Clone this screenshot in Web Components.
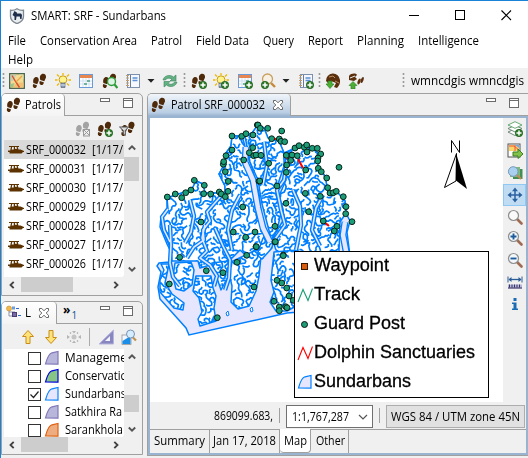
<!DOCTYPE html>
<html lang="en"><head><meta charset="utf-8"><title>SMART: SRF - Sundarbans</title>
<style>html,body{margin:0;width:528px;height:458px;overflow:hidden;background:#f0f0f0}body{font:12px/16px "Open Sans","Noto Sans",sans-serif;color:#000}</style></head>
<body><smart-app></smart-app>
<script>
const def=(name,render)=>customElements.define(name,class extends HTMLElement{
  connectedCallback(){ if(this.shadowRoot)return; this.attachShadow({mode:'open'}).innerHTML=render(this); }
});

/* Text squeezed horizontally to a fixed advance width */
customElements.define('fit-text',class extends HTMLElement{
  connectedCallback(){
    if(this.shadowRoot)return;
    const r=this.attachShadow({mode:'open'});
    r.innerHTML='<style>:host{display:block;flex:none;white-space:nowrap}span{display:inline-block;transform-origin:0 50%;vertical-align:top}</style><span><slot></slot></span>';
    const w=+this.getAttribute('w'), s=r.querySelector('span');
    this.style.width=w+'px';
    s.style.transform='scaleX('+(w/s.getBoundingClientRect().width)+')';
  }
});

const foot='<g fill="#4f2a0a"><path d="M9.500 1.200C12 0 14.500 1.500 14 4.500L12.300 8.300 8.300 7C7.500 4 7.800 2.200 9.500 1.200zM7.800 8l4 1.200c0 2.200-1.500 3.200-2.900 2.700S7 10 7.800 8z"/><path d="M2.800 4.500C5 3.300 7.200 5 6.700 7.700L5.200 11.300 1.400 10C.8 7.500 1.200 5.500 2.800 4.500zM1.200 11l3.700 1.200c0 2.200-1.400 3.200-2.700 2.700S.4 13 1.200 11z"/></g>';
const plus='<circle cx="12" cy="12" r="3.700" fill="#2f7d2b" stroke="#1b5b1c" stroke-width=".7"/><path d="M9.500 12h5M12 9.500v5" stroke="#fff" stroke-width="1.500"/>';
const bulb='<g stroke="#efb900" stroke-width="1.300"><path d="M8 0v2M0 7h2.500M13.500 7H16M2 1.500l2 2M14 1.500l-2 2M2 12.500l2-2M14 12.500l-2-2"/></g><circle cx="8" cy="6.700" r="3.900" fill="#fff48c" stroke="#c99b14"/><path d="M6 10h4v4.500H6z" fill="#8799b5" stroke="#5d6b80" stroke-width=".7"/><path d="M6 12h4" stroke="#fff" stroke-width=".8"/>';
const cal='<rect x="1.500" y="1.500" width="13" height="13" fill="#fff" stroke="#6a9bd8"/><path d="M2 2h12v3H2z" fill="#e88651"/><path d="M2 8h12M2 11h12M5 5v9M8 5v9M11 5v9" stroke="#cfdff2"/><path d="M9 7h3v2H9zM6 10h3v2H6z" fill="#70b39a"/>';
const book='<rect x="2.500" y="1.500" width="12" height="13" fill="#f5f9ff" stroke="#7d91ae"/><path d="M5.500 2v12" stroke="#6b7a90"/><path d="M1 2.500h3M1 5h3M1 7.500h3M1 10h3M1 12.500h3" stroke="#c3a06b"/><path d="M7.500 5h5M7.500 7.500h5" stroke="#5b8fd6" stroke-width="1.300"/>';
const lens=(f,h)=>`<path d="M10 10l4.500 4.500" stroke="${h}" stroke-width="2.600" stroke-linecap="round"/><circle cx="6.500" cy="6.500" r="5" fill="${f}" stroke="#8d8d8d" stroke-width="1.200"/>`;
const up='<path d="M5 8.500l4 4H7V16H3v-3.500H1z" fill="#4cae35" stroke="#257a1e" stroke-width=".6"/>';
const I={
 shield:'<path d="M8 .7C6 2 3.500 2.500 1.500 2.200v6C1.500 12 5 14.500 8 15.700c3-1.200 6.500-3.700 6.500-7.500v-6C12.500 2.500 10 2 8 .7z" fill="#e9edf0" stroke="#7d8890" stroke-width="1.300"/><path d="M5.500 3l1.500 1h.5l.5 1.500h4l1 1.500-.5 4h-1.300l-.4-2.500H7.500L7 12H5.500V8.500L3.500 7z" fill="#1e2e4c"/>',
 map:'<rect x=".7" y=".7" width="14.600" height="14.600" fill="#f3dc92" stroke="#45614d" stroke-width="1.300"/><path d="M1.500 1.500h6l-3 6-3 1z" fill="#c3cfb4"/><path d="M10 1.500h4.500v5z" fill="#d6dfa8"/><path d="M3 14.500l5-5 6.500 0v5z" fill="#f0c277"/><path d="M3 2.500l3.500 6 4 6" stroke="#d9522c" stroke-width="1.400" fill="none"/><path d="M7 9l6-6" stroke="#f0a24a" stroke-width="1.200"/><path d="M1.500 11l4-1-1.500 4.500H1.500z" fill="#9fc48a"/>',
 feet:foot, feetplus:foot+plus, bulb, bulbplus:bulb+plus, cal, calplus:cal+plus,
 feetfind:foot+'<circle cx="9.500" cy="8.500" r="4" fill="#ddf3e4" stroke="#2c9b36" stroke-width="1.400"/><path d="M12.500 11.500l3 3.500" stroke="#2c9b36" stroke-width="2.200"/>',
 book, bookplus:book+plus,
 refresh:'<path d="M1 7C2 2.500 8 1 11.500 4L14 2v6H8l2-2C7 4.500 4.500 5 3.500 7zM15 9c-1 4.500-7 6-10.500 3L2 14V8.500h6l-2 2c3 1.500 5.500.5 6.500-1.500z" fill="#64b183" stroke="#39855b" stroke-width=".6"/>',
 findplus:'<path d="M11 10l4 4" stroke="#c8883b" stroke-width="2.400"/><circle cx="7.500" cy="6" r="5" fill="#f7f1e4" stroke="#c8a063" stroke-width="1.300"/><g transform="translate(-7 0)">'+plus+'</g>',
 down:'<path d="M.5 6h7L4 9.800z" fill="#222"/>',
 globedown:'<path d="M1 8a7 7 0 0 1 14-1c.5 3-1 6-3 8L9 14l2-4-5-2-2 3z" fill="#5c2f0c"/><path d="M4 4l4-1 2 2M10 8l4 2" stroke="#b98f68" fill="none"/><path d="M3 8h4v3h2l-4 4.500L1 11h2z" fill="#4cae35" stroke="#257a1e" stroke-width=".6"/>',
 feetup:'<path d="M1 3c2-3 7-3 8-1L7 4l2 2-3 2-5-1z" fill="#5c2f0c"/><path d="M2 5l5-2" stroke="#eee"/><ellipse cx="11.200" cy="8.500" rx="1.400" ry="3.200" transform="rotate(20 11 8)" fill="#5c2f0c"/><ellipse cx="14.500" cy="7" rx="1.300" ry="3.200" transform="rotate(20 14.500 6)" fill="#5c2f0c"/>'+up,
 feetdel:'<g style="filter:grayscale(1)" opacity=".4">'+foot+'</g><rect x="8.500" y="8.500" width="6" height="6.500" fill="#eee" stroke="#999"/><path d="M9 9l5 5M14 9l-5 5" stroke="#999"/>',
 filter:'<g transform="translate(1.500 0)">'+foot+'</g><path d="M.5 6h9L6.300 9.500v5l-2-1.500V9.500z" fill="#ddd" stroke="#555"/>',
 boat:'<path d="M1 4h10v1H9.700l.8 2.500h2L16 9v1h-1l-1.500 1.500H1.500V10H0V8.500h2.200L3 5H1z" fill="#5b3200"/><path d="M4.300 5h1.400v2.500H3.700zM7 5h1.500l.5 1.800H7z" fill="#fff"/>',
 layers:'<path d="M3 5v6h4M3 7h6" stroke="#8a93a8" fill="none"/><circle cx="3" cy="3.500" r="2.500" fill="#f0ba4d" stroke="#c98c28" stroke-width=".6"/><path d="M6 1.500h3v3H6z" fill="#6a9de0"/><path d="M10 3.500h3" stroke="#36c"/><rect x="6.500" y="7.500" width="4" height="4" fill="#7a6aa6" stroke="#4b3c78"/><path d="M12 10.500h3" stroke="#36c"/>',
 close:'<path d="M3.500 3.500h2.300L8 5.800l2.200-2.300h2.300v2.200L10.200 8l2.300 2.300v2.200h-2.300L8 10.200l-2.200 2.300H3.500v-2.200L5.800 8 3.500 5.700z" fill="#fff" stroke="#666"/>',
 aup:'<path d="M8 1.500l5.500 6H10v7H6v-7H2.500z" fill="#ffe27a" stroke="#c88d18"/>',
 adown:'<path d="M8 14.500l5.500-6H10v-7H6v7H2.500z" fill="#ffe27a" stroke="#c88d18"/>',
 zoomto:'<circle cx="8" cy="8" r="2.500" fill="#c4c4c4"/><g fill="#b5b5b5"><path d="M6 2h4L8 4.500zM6 14h4l-2-2.500zM1 6v4l3-2zM15 6v4l-3-2z"/></g><path d="M4 4.500l1-1M12 4.500l-1-1M4 11.500l1 1M12 11.500l-1 1" stroke="#aaa" stroke-width="1.300"/>',
 tri:'<path d="M15.500 1v14H1z" fill="#8886be" stroke="#b5b5df"/><path d="M12 7v5H7z" fill="#f4f4ff"/>',
 style:'<rect x="1" y="6" width="9" height="9.500" fill="#f1f7ff" stroke="#888" stroke-width=".7"/><path d="M1.500 15V12l8-5v8z" fill="#1b8fe8"/><path d="M11.500 8l3.500 3.500" stroke="#c29253" stroke-width="2.200"/><circle cx="9.500" cy="5" r="4" fill="#d6ecff" stroke="#7895b5"/>',
 poly:'<path d="M1.500 14C3 9 4 4 8 2.800L14 1.500v12.700z" fill="var(--f)" stroke="var(--s)" stroke-width="1.200"/>',
 stackplus:'<g fill="#fff" stroke="#62806d" stroke-width=".9"><path d="M1 11l7-3 7 3-7 3.500z"/><path d="M1 7.500l7-3 7 3-7 3.500z"/><path d="M1 4l7-3.300L15 4 8 7.300z" stroke="#58a267"/></g>'+plus,
 export:'<rect x="1" y="1" width="12" height="13" fill="#fff" stroke="#555"/><path d="M2 2h10v6H2z" fill="#fbd565"/><path d="M2 3h5l5 4M8 2v6" stroke="#ee5440" fill="none"/><path d="M8 2h4v3z" fill="#74a8e8"/><path d="M6 9h5V6l5 5-5 4.500V13H6z" fill="#83c24a" stroke="#3c7f22"/>',
 mapfind:'<rect x="6" y="4" width="9.500" height="10" fill="#438f53"/><rect x="3" y="2" width="10" height="10" fill="#7eb87d"/><path d="M10 10l4 4" stroke="#c28953" stroke-width="2"/><circle cx="6.200" cy="6.500" r="4.800" fill="#a9d0ee" stroke="#7699bd"/>',
 pan:'<path d="M8 2v12M2 8h12" stroke="#2c62a0" stroke-width="1.500"/><path d="M5 4.200L8 .5l3 3.700zM5 11.800l3 3.700 3-3.700zM4.200 5L.5 8l3.700 3zM11.800 5l3.700 3-3.700 3z" fill="#2c62a0"/>',
 zoom:lens('#fafafa','#a06b53'), zin:lens('#f2f7fa','#a06b53')+'<path d="M3.500 6.500h6M6.500 3.500v6" stroke="#1d5b9c" stroke-width="1.900"/>', zout:lens('#f2f7fa','#a06b53')+'<path d="M3.500 6.500h6" stroke="#1d5b9c" stroke-width="1.900"/>',
 measure:'<path d="M2 5.500h12" stroke="#2c5d96" stroke-width="1.300"/><path d="M1 2.500v6M15 2.500v6" stroke="#2c5d96"/><path d="M4.500 3v5L1.500 5.500zM11.500 3v5l3-2.500z" fill="#2c5d96"/><path d="M1 10.500h14v4H1z" fill="#b8b6d6"/><path d="M2.500 10.500v3M5 10.500v3M7.500 10.500v3M10 10.500v3M12.500 10.500v3" stroke="#343063"/><path d="M1 14h14" stroke="#343063"/>',
 info:'<path d="M6.500 2h3v3h-3zM5 6.500h4.500v6H11V14H5v-1.500h1.500V8H5z" fill="#1c6cb5"/>',
 min:'<rect x="3.500" y="3.500" width="9" height="3" fill="#fff" stroke="#6b6b6b"/>',
 max:'<rect x="3.500" y="3.500" width="9" height="9" fill="#fff" stroke="#6b6b6b"/><path d="M3 5.500h10" stroke="#6b6b6b"/>',
 chu:'<path d="M4.800 9.500L8 6.300l3.200 3.200" fill="none" stroke="#555" stroke-width="1.900"/>',
 chd:'<path d="M4.800 6.500L8 9.700l3.200-3.200" fill="none" stroke="#555" stroke-width="1.900"/>',
 chl:'<path d="M9.700 4.800L6.500 8l3.200 3.200" fill="none" stroke="#444" stroke-width="1.900"/>',
 chr:'<path d="M6.300 4.800L9.500 8l-3.200 3.200" fill="none" stroke="#444" stroke-width="1.900"/>',
 thin:'<path d="M4 6l4 4 4-4" fill="none" stroke="#555" stroke-width="1.200"/>',
 wmin:'<path d="M3 7.500h10" stroke="#000"/>', wmax:'<rect x="3.500" y="2.500" width="9" height="9" fill="none" stroke="#000"/>', wclose:'<path d="M3.500 2.500l9.500 9.500M13 2.500L3.500 12" stroke="#000" stroke-width="1.100"/>',
 grip:'<path d="M1.500 0v16" stroke="#999" stroke-width="1.600" stroke-dasharray="2 2"/>',
 waypoint:'<rect x="4.500" y="5.500" width="6" height="6" fill="#d95f0e" stroke="#3a1a00"/>', guard:'<circle cx="7.500" cy="8.500" r="3" fill="#1b9e77" stroke="#111"/>',
 zig:'<path d="M1 15L6 2.500l5 11 4.500-12" fill="none" stroke="var(--s)" stroke-width="1.100"/>'
};
def('ui-icon',e=>{const n=e.getAttribute('name'),w=n=='down'?8:n=='grip'?4:16;
 return `<style>:host{display:block;flex:none;width:${w}px;height:16px}svg{display:block;width:100%;height:100%}</style><svg viewBox="0 0 ${w} 16">${I[n]}</svg>`});

def('title-bar',()=>`<style>:host{display:flex;flex:none;box-sizing:border-box;align-items:center;height:30px;padding:0 14px 0 8px;background:#fff}ui-icon{margin-right:6px}ui-icon.w{margin:0 0 0 30px}.s{flex:1}</style>
<ui-icon name="shield"></ui-icon><fit-text w="135">SMART: SRF - Sundarbans</fit-text><div class="s"></div><ui-icon class="w" name="wmin"></ui-icon><ui-icon class="w" name="wmax"></ui-icon><ui-icon class="w" name="wclose"></ui-icon>`);
def('menu-bar',()=>`<style>:host{display:flex;flex:none;box-sizing:border-box;flex-wrap:wrap;column-gap:14px;row-gap:3px;align-content:flex-start;height:37px;padding:2px 20px 0 7px;background:#fff}</style>`+
 [['File',18],['Conservation Area',97],['Patrol',31],['Field Data',53],['Query',31],['Report',35],['Planning',47],['Intelligence',61],['Help',25]].map(([t,w])=>`<fit-text w="${w}">${t}</fit-text>`).join(''));
def('tool-bar',()=>{let x=1;const at=(p,w,h)=>{const m=p-x;x=p+w;return `<div style="margin-left:${m}px">${h}</div>`};
 return `<style>:host{display:flex;flex:none;box-sizing:border-box;align-items:center;height:24px;padding-top:2px;background:#f0f0f0}div{flex:none}</style>`+
 [[2,'grip'],[9,'map'],[32,'feet'],[55,'bulb'],[78,'cal'],[102,'feetfind'],[125,'book'],[147,'down'],[162,'refresh'],[183,'grip'],[191,'feetplus'],[213,'bulbplus'],[237,'calplus'],[260,'findplus'],[282,'down'],[298,'bookplus'],[318,'grip'],[325,'globedown'],[348,'feetup'],[402,'grip']].map(([p,n])=>at(p,n=='grip'?4:n=='down'?8:16,`<ui-icon name="${n}"></ui-icon>`)).join('')+at(411,113,'<fit-text w="113">wmncdgis wmncdgis</fit-text>')});

def('tab-folder',e=>`<style>:host{display:flex;flex:none;flex-direction:column;box-sizing:border-box;border:1px solid #a0a0a0;border-radius:5px 5px 0 0;background:#f0f0f0;overflow:hidden;min-width:0}
header{display:flex;height:22px;flex:none}.tab{display:flex;align-items:center;box-sizing:border-box;border-right:1px solid #a0a0a0;border-radius:0 4px 0 0;background:var(--tab,linear-gradient(#fff,#f4f4f4));flex:none}
.rest{flex:1;display:flex;justify-content:flex-end;gap:7px;border-bottom:1px solid #a0a0a0;padding:1px 6px 0 4px}.more{flex:1}.body{flex:1;display:flex;flex-direction:column;min-height:0}</style>
<header><div class="tab" style="width:${e.getAttribute('tab')}px"><slot name="tab"></slot></div><div class="rest"><div class="more"><slot name="more"></slot></div><ui-icon name="min"></ui-icon><ui-icon name="max"></ui-icon></div></header><div class="body"><slot></slot></div>`);

def('scroll-box',e=>{const g=n=>e.getAttribute(n);return `<style>:host{display:grid;grid-template:minmax(0,1fr) 15px / 120px 15px;margin-left:2px;min-height:0}
.v{display:flex;flex-direction:column;align-items:center;background:#f0f0f0}.h{display:flex;align-items:center;background:#f0f0f0}.view{background:#fff;overflow:hidden;border-radius:0 0 3px 0}.t{background:#cdcdcd;flex:none}.s{flex:1}</style>
<div class="view"><slot></slot></div><div class="v"><ui-icon name="chu"></ui-icon><div class="t" style="width:15px;height:${g('vh')}px;margin-top:${g('vt')}px"></div><div class="s"></div><ui-icon name="chd"></ui-icon></div>
<div class="h"><ui-icon name="chl"></ui-icon><div class="t" style="height:15px;width:${g('hw')}px;margin-left:1px"></div><div class="s"></div><ui-icon name="chr"></ui-icon></div>`});

def('patrol-row',e=>`<style>:host{display:flex;align-items:center;height:19px;padding-left:4px}:host([selected]){background:#d9d9d9}fit-text{margin-left:2px}fit-text+fit-text{margin-left:6px}</style><ui-icon name="boat"></ui-icon><fit-text w="60">${e.getAttribute('label')}</fit-text><fit-text w="31">[1/17/</fit-text>`);
def('layer-row',e=>`<style>:host{display:flex;align-items:center;height:18px;padding-left:24px;--f:${e.getAttribute('fill')};--s:${e.getAttribute('line')}}svg{width:13px;height:13px;flex:none;margin-right:3px}fit-text{margin-left:5px}</style>
<svg viewBox="0 0 13 13"><rect x=".5" y=".5" width="12" height="12" fill="#fff" stroke="#333"/>${e.hasAttribute('on')?'<path d="M2.500 6.500l3 3 5-6" fill="none" stroke="#222" stroke-width="1.200"/>':''}</svg><ui-icon name="poly"></ui-icon><fit-text w="${e.getAttribute('w')}">${e.getAttribute('label')}</fit-text>`);

/* Map of mangrove islands and tidal channels */
function mapSvg(){
 let seed=73;const rnd=()=>(seed=(seed*16807)%2147483647)/2147483647;
 const P=(ox,oy,a)=>a.map(([x,y])=>[ox+x/3,oy+y/3]);
 const pts=[...P(150,115,[[246,63],[275,64],[288,56],[309,60],[322,30],[308,98],[246,105],[298,113],[311,122],[228,122],[281,135],[220,148],[221,140],[226,170],[235,199],[133,196],[163,211],[123,225],[107,233],[95,248],[76,237],[52,246],[161,236],[182,237],[208,231],[214,237],[226,245],[234,229],[278,276],[153,321],[250,351],[315,351],[327,199]]),
 ...P(255,115,[[9,30],[16,40],[38,40],[80,48],[50,71],[73,72],[78,79],[89,80],[3,120],[18,121],[41,145],[14,198],[66,213],[94,172],[95,150],[94,121],[111,120],[107,136],[127,122],[152,165],[120,99],[132,92],[148,97],[155,90],[156,111],[172,100],[187,100],[197,117],[189,129],[188,138],[190,160],[199,170],[215,189],[252,157],[218,218],[225,234],[235,233],[244,229],[265,245],[273,275],[272,296],[291,320],[246,334],[238,348],[205,318],[161,290],[196,244],[151,235],[93,265],[60,334],[60,381],[3,395],[85,420]]),
 ...P(150,225,[[89,97],[58,177],[169,137],[219,143],[261,112],[287,37],[319,65],[290,91],[376,50],[400,92],[381,166],[395,174],[410,189],[417,213],[430,226],[372,229],[388,246],[407,245],[388,257],[411,248],[312,186],[202,278]])];
 const sil='M189 335L186 328 178 319 160 299 158 287 161 272 157 266 159 263 169 262 171 252 167 244 160 227 161 217 167 209 167 198 176 195 185 193 192 189 196 181 203 184 205 193 218 193 225 196 225 186 219 174 224 165 226 153 231 146 232 136 242 136 252 133 258 125 264 128 268 138 279 141 284 153 291 150 299 146 311 148 317 152 318 167 325 176 328 192 338 193 345 201 346 213 350 221 347 232 350 256 330 300 300 312 287 313Z';
 const land=['M167 198L176 195 192 189 196 181 203 184 205 193 218 193 225 196 225 186 219 174 224 165 226 153 231 146 232 136 242 136 246 150 252 168 259 193 261 212 268 238 263 258 253 262 240 250 228 262 217 263 200 268 198 261 172 261 171 250 162 228 162 216 168 209Z',
 'M245 136L252 133 258 125 264 128 268 138 279 141 284 153 284 166 278 184 276 195 281 213 277 230 271 238 262 204 258 180 250 162Z',
 'M285 153L299 146 311 148 317 152 318 167 325 176 328 192 338 193 345 201 346 213 340 222 339 251 342 262 295 262 276 250 272 239 284 219 283 209 279 196 286 180Z',
 'M161 264L169 264 165 283 172 294 184 303 183 310 174 308 160 292 160 280 164 270Z','M175 263L191 262 194 270 192 285 184 291 176 289 173 277Z','M196 276L211 276 213 288 216 296 214 308 216 321 200 326 198 319 202 312 199 298 193 291Z','M212 263L228 261 230 273 221 290 216 275Z',
 'M231 262L254 251 261 256 259 276 256 291 249 306 238 309 231 302 232 286 229 273Z','M274 252L298 250 298 305 287 311 276 311 270 302 274 292 271 280Z','M263 238L274 235 272 248 262 259 257 255Z'];
 /* self-avoiding random walks form the creek network */
 const occ=new Set(),key=(x,y)=>Math.round(x/2.3)+','+Math.round(y/2.3);let creeks='';
 for(let i=0;i<2000;i++){let x=159+rnd()*190,y=126+rnd()*196,a=rnd()*6.3,t=rnd()<.5?1:-1;const own=new Set(),q=[[x,y]];
  for(let k=0;k<13;k++){if(rnd()<.4)t=-t;a+=t*rnd()*1.2;x+=Math.cos(a)*2;y+=Math.sin(a)*2;const c=key(x,y);if(occ.has(c)&&!own.has(c))break;own.add(c);q.push([x,y]);}
  if(q.length>3){q.forEach(([u,v])=>occ.add(key(u,v)));creeks+='M'+q.map(([u,v])=>u.toFixed(1)+' '+v.toFixed(1)).join('L');}}
 const ch=['M170 225L171 245 170 263 173 277 180 286','M187 258L194 247 204 240 203 230 210 221 207 212 213 205 221 196','M205 225L202 238 207 251 200 258 210 265 217 276 214 286','M215 228L223 246 230 260 229 278 225 290','M168 209L162 217 164 230 170 242','M240 195L232 210 228 230 232 250','M287 160L284 180 277 190 281 210 285 225 273 242','M293 190L300 206 301 225 296 250','M323 195L316 208 312 230 320 246','M264 142L267 165 263 185','M190 200L194 216 191 232 185 243'];
 const wide=['M246 147L245 162 253 180 258 208 263 228 270 242','M345 222L343 235 347 256'];
 const st=(a,c,w)=>`<g fill="none" stroke="${c}" stroke-width="${w}" stroke-linejoin="round">${a.map(d=>`<path d="${d}"/>`).join('')}</g>`;
 return `<svg viewBox="150 118 353 284" width="353" height="284"><defs><clipPath id="l">${land.map(d=>`<path d="${d}"/>`).join('')}</clipPath></defs>
 <path d="${sil}" fill="#e6e6ff" stroke="#0080ff" stroke-width="1.500"/><g fill="#fff" stroke="#0080ff" stroke-width="1.500" stroke-linejoin="round">${land.map(d=>`<path d="${d}"/>`).join('')}</g>
 <path clip-path="url(#l)" d="${creeks}" fill="none" stroke="#0080ff" stroke-width="1.700" stroke-linejoin="round"/>
 ${st(ch,'#0080ff',4.4)}${st(ch,'#e6e6ff',1.6)}${st(wide,'#0080ff',7)}${st(wide,'#e6e6ff',4.4)}
 <path d="M226 313l2-2 1 4-2 1zM250 309l2-2 1 4-2 1z" fill="#fff" stroke="#0080ff"/>
 <path d="M298 159l5 9M273 139l6 0M287 158l4 2M324 222l5 4" stroke="#f00" stroke-width="2"/>
 <g fill="#1b9e77" stroke="#07221a" stroke-width="1">${pts.map(([x,y])=>`<circle cx="${x.toFixed(1)}" cy="${y.toFixed(1)}" r="2.900"/>`).join('')}</g>
 <path d="M451.500 152.500v-12l8 12v-12" fill="none" stroke="#000"/><path d="M456.500 153.500L444.500 187.500 456 181z" fill="#fff" stroke="#000"/><path d="M456 153l11 36-11-8.500z" fill="#000"/></svg>`;
}
def('map-legend',()=>`<style>:host{position:absolute;left:144px;top:133px;width:195px;height:147px;box-sizing:border-box;border:1px solid #000;background:#fff;font:18px/29px "Liberation Sans",Arial,sans-serif;-webkit-text-stroke:.3px #000}div{display:flex;align-items:center;height:29px;padding-left:2px}div:first-of-type{margin-top:-1px}fit-text{margin-left:1px;margin-top:-1px}</style>
 <div><ui-icon name="waypoint"></ui-icon><fit-text w="75">Waypoint</fit-text></div><div style="--s:#1b9e77"><ui-icon name="zig"></ui-icon><fit-text w="46">Track</fit-text></div><div><ui-icon name="guard"></ui-icon><fit-text w="91">Guard Post</fit-text></div><div style="--s:#f00"><ui-icon name="zig"></ui-icon><fit-text w="161">Dolphin Sanctuaries</fit-text></div><div style="--s:#0080ff;--f:#e6e6ff"><ui-icon name="poly"></ui-icon><fit-text w="97">Sundarbans</fit-text></div>`);
def('map-view',()=>`<style>:host{display:block;position:relative;width:353px;height:284px;background:#fff}svg{display:block}</style>${mapSvg()}<map-legend></map-legend>`);
def('map-tools',()=>`<style>:host{display:flex;flex-direction:column;width:23px;height:284px;background:#f0f0f0}div{box-sizing:border-box;height:21.900px;display:flex;justify-content:center;align-items:center}.on{background:#bfdcf3;border:1px solid #8ec8f5}</style>`+['stackplus','export','mapfind','pan','zoom','zin','zout','measure','info'].map(n=>`<div class="${n=='pan'?'on':''}"><ui-icon name="${n}"></ui-icon></div>`).join(''));
def('status-bar',()=>`<style>:host{display:flex;align-items:center;height:27px;background:#f0f0f0;padding-left:64px}i{width:1px;height:15px;background:#a0a0a0;margin:0 6px 0 6px}.c{display:flex;align-items:center;box-sizing:border-box;width:87px;height:23px;border:1px solid #707070;background:#fff;padding-left:5px;margin-top:2px}.c ui-icon{margin-left:6px}.b{display:flex;align-items:center;box-sizing:border-box;width:139px;height:23px;margin:2px 0 0 0;border:1px solid #adadad;background:#e1e1e1;padding-left:4px}</style>
<fit-text w="59">869099.683,</fit-text><i></i><div class="c"><fit-text w="57">1:1,767,287</fit-text><ui-icon name="thin"></ui-icon></div><i></i><div class="b"><fit-text w="129">WGS 84 / UTM zone 45N</fit-text></div>`);
def('page-tabs',()=>`<style>:host{display:flex;height:24px;background:#f0f0f0;box-sizing:border-box;border-top:1px solid #a0a0a0}div{box-sizing:border-box;border-right:1px solid #a0a0a0;padding:3px 0 0 4px}.on{background:#fff;margin-top:-1px;padding-top:4px;border-radius:0 0 4px 4px;border-bottom:1px solid #a0a0a0;height:24px}</style>
<div style="width:60px"><fit-text w="51">Summary</fit-text></div><div style="width:70px;padding-left:3px"><fit-text w="63">Jan 17, 2018</fit-text></div><div class="on" style="width:31px"><fit-text w="23">Map</fit-text></div><div style="width:38px;padding-left:5px"><fit-text w="29">Other</fit-text></div>`);

def('smart-app',()=>`<style>:host{display:flex;flex-direction:column;box-sizing:border-box;width:528px;height:458px;border:solid #1883d7;border-width:1px 0 0 1px;background:#f0f0f0}
main{display:flex;flex:1;gap:4px;margin-top:1px;min-height:0}.left{display:flex;flex:none;flex-direction:column;width:142px;gap:5px}.p{height:203px}.l{height:154px}
.bar{display:flex;align-items:center;flex:none;box-sizing:border-box;height:24px}.p .bar{padding:2px 0 0 73px;gap:6px}.l .bar{height:25px;padding:0 0 0 18px;gap:7px}.sep{width:1px;height:18px;background:#aaa;margin-right:1px}.grow{flex:1}
.more{display:flex;line-height:16px;margin-left:2px}.more b{font-size:12px;line-height:14px}.n{font-size:10px;padding-top:4px;color:#14508c;margin-left:1px}
.right{width:381px;height:363px;border-right:0;border-radius:5px 0 0 0;--tab:linear-gradient(#f1f5fa,#b9cde3 85%,#99b4d1)}.frame{border:2px solid #99b4d1}.row{display:flex}</style>
<title-bar></title-bar><menu-bar></menu-bar><tool-bar></tool-bar>
<main><div class="left"><tab-folder class="p" tab="63"><ui-icon slot="tab" name="feet" style="margin:0 3px 0 4px"></ui-icon><fit-text slot="tab" w="36">Patrols</fit-text>
<div class="bar"><ui-icon name="feetdel"></ui-icon><ui-icon name="feetplus"></ui-icon><ui-icon name="filter"></ui-icon></div>
<scroll-box class="grow" vt="1" vh="24" hw="52">${[32,31,30,29,28,27,26].map((n,i)=>`<patrol-row ${i?'':'selected'} label="SRF_0000${n}"></patrol-row>`).join('')}</scroll-box><div style="height:3px;flex:none"></div></tab-folder>
<tab-folder class="l" tab="55"><ui-icon slot="tab" name="layers" style="margin:0 3px 0 4px"></ui-icon><fit-text slot="tab" w="6">L</fit-text><ui-icon slot="tab" name="close" style="margin-left:5px"></ui-icon><div slot="more" class="more"><b>»</b><span class="n">1</span></div>
<div class="bar"><ui-icon name="aup"></ui-icon><ui-icon name="adown"></ui-icon><ui-icon name="zoomto"></ui-icon><div class="sep"></div><ui-icon name="tri"></ui-icon><ui-icon name="style"></ui-icon></div>
<scroll-box class="grow" vt="30" vh="17" hw="47"><layer-row fill="#b9b6db" line="#8079b8" w="62" label="Manageme"></layer-row><layer-row fill="#86c586" line="#0000e0" w="61" label="Conservatic"></layer-row><layer-row on fill="#e6e6ff" line="#0a84ff" w="61" label="Sundarbans"></layer-row><layer-row fill="#b9b6db" line="#8079b8" w="57" label="Satkhira Ra"></layer-row><layer-row fill="#eead80" line="#de6310" w="58" label="Sarankhola"></layer-row></scroll-box><div style="height:2px;flex:none"></div></tab-folder></div>
<tab-folder class="right" tab="143"><ui-icon slot="tab" name="feet" style="margin:0 4px 0 3px"></ui-icon><fit-text slot="tab" w="94">Patrol SRF_000032</fit-text><ui-icon slot="tab" name="close" style="margin-left:5px"></ui-icon>
<div class="frame"><div class="row"><map-view></map-view><map-tools></map-tools></div><status-bar></status-bar><page-tabs></page-tabs></div></tab-folder></main>`);
</script></body></html>
